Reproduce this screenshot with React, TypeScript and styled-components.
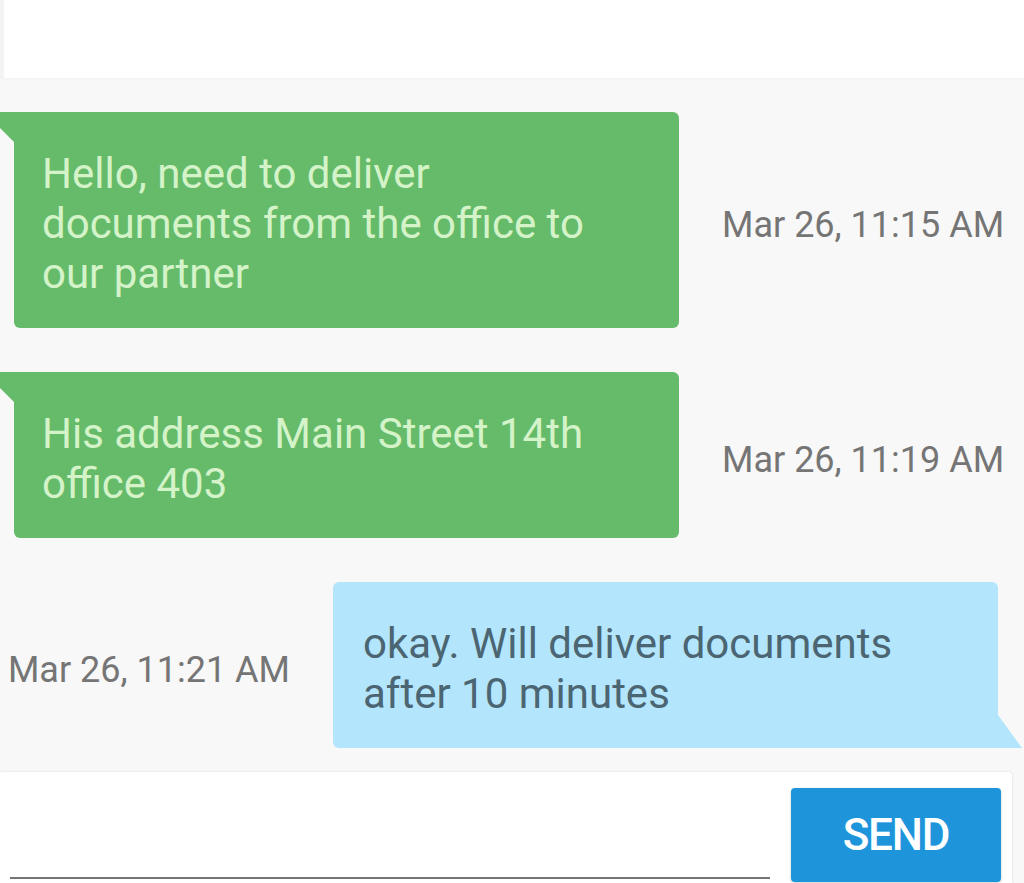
import React from "react";
import styled, { createGlobalStyle, css } from "styled-components";

const GlobalStyle = createGlobalStyle`
  html, body {
    margin: 0;
    padding: 0;
    background: #f8f8f8;
    font-family: Roboto, "Noto Sans", "Liberation Sans", sans-serif;
    overflow: hidden;
  }
  * { box-sizing: border-box; }
`;

const Page = styled.div`
  width: 1024px;
  height: 883px;
  display: flex;
  flex-direction: column;
  background: #f8f8f8;
  overflow: hidden;
`;

const Header = styled.header`
  height: 78px;
  flex: none;
  background: #ffffff;
  border-left: 4px solid #f3f3f3;
  box-shadow: 0 1px 2px rgba(0, 0, 0, 0.03);
`;

const Messages = styled.main`
  display: flex;
  flex-direction: column;
  gap: 44px;
  padding-top: 34px;
  flex: none;
`;

const Row = styled.div<{ $out?: boolean }>`
  display: flex;
  align-items: center;
  ${(p) =>
    p.$out
      ? css`
          justify-content: flex-end;
          padding-right: 26px;
          gap: 43px;
        `
      : css`
          padding-left: 14px;
          gap: 43px;
        `}
`;

const Bubble = styled.div<{ $out?: boolean }>`
  position: relative;
  width: 665px;
  padding: 37px 30px 29px 28px;
  font-size: 42px;
  line-height: 50px;
  border-radius: 6px;
  ${(p) =>
    p.$out
      ? css`
          background: #b3e5fc;
          color: #4b6572;
          padding-left: 30px;
          border-bottom-right-radius: 0;
          &::after {
            content: "";
            position: absolute;
            right: -24px;
            bottom: 0;
            width: 24px;
            height: 33px;
            background: #b3e5fc;
            clip-path: polygon(0 0, 100% 100%, 0 100%);
          }
        `
      : css`
          background: #66bb6a;
          color: #d4f3c9;
          border-top-left-radius: 0;
          &::before {
            content: "";
            position: absolute;
            left: -14px;
            top: 0;
            width: 14px;
            height: 30px;
            background: #66bb6a;
            clip-path: polygon(0 0, 100% 0, 100% 100%, 0 16px);
          }
        `}
`;

const Time = styled.span`
  margin-top: 9px;
  font-size: 36px;
  line-height: 44px;
  color: #757575;
  white-space: nowrap;
`;

const Composer = styled.footer`
  margin-top: 24px;
  width: 1012px;
  height: 112px;
  flex: none;
  background: #ffffff;
  border-radius: 0 4px 0 0;
  box-shadow: 0 0 3px rgba(0, 0, 0, 0.12);
  display: flex;
  align-items: flex-end;
  gap: 21px;
  padding: 0 11px 2px 10px;
`;

const Input = styled.input`
  flex: 1;
  height: 60px;
  margin-bottom: 3px;
  border: none;
  border-bottom: 2px solid #757575;
  background: transparent;
  font-family: inherit;
  font-size: 36px;
  color: #333;
  outline: none;
  padding: 0;
`;

const SendButton = styled.button`
  width: 210px;
  height: 94px;
  border: none;
  border-radius: 4px;
  background: #1e95db;
  color: #ffffff;
  font-family: Roboto, "Liberation Sans", sans-serif;
  font-size: 44px;
  font-weight: 500;
  letter-spacing: -1.2px;
  box-shadow: 0 1px 3px rgba(0, 0, 0, 0.2);
  cursor: pointer;
`;

type Msg = { text: string; time: string; out?: boolean };

const messages: Msg[] = [
  {
    text: "Hello, need to deliver documents from the office to our partner",
    time: "Mar 26, 11:15 AM",
  },
  { text: "His address Main Street 14th office 403", time: "Mar 26, 11:19 AM" },
  {
    text: "okay. Will deliver documents after 10 minutes",
    time: "Mar 26, 11:21 AM",
    out: true,
  },
];

export default function App() {
  return (
    <>
      <GlobalStyle />
      <Page>
        <Header />
        <Messages>
          {messages.map((m, i) =>
            m.out ? (
              <Row key={i} $out>
                <Time>{m.time}</Time>
                <Bubble $out>{m.text}</Bubble>
              </Row>
            ) : (
              <Row key={i}>
                <Bubble>{m.text}</Bubble>
                <Time>{m.time}</Time>
              </Row>
            )
          )}
        </Messages>
        <Composer>
          <Input type="text" aria-label="Message" />
          <SendButton>SEND</SendButton>
        </Composer>
      </Page>
    </>
  );
}
